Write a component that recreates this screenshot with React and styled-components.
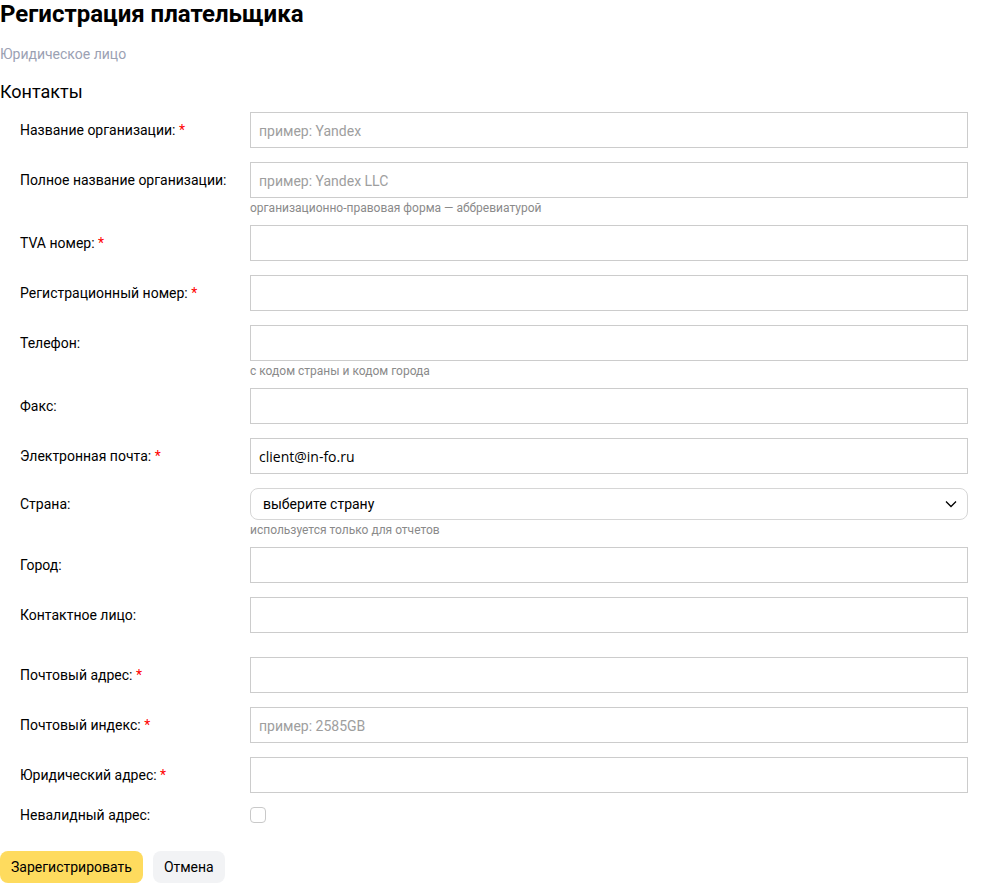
import React from "react";
import styled, { createGlobalStyle } from "styled-components";

const GlobalStyle = createGlobalStyle`
  body {
    margin: 0;
    background: #fff;
    font-family: Roboto, "Noto Sans", sans-serif;
    color: #000;
  }
`;

const fields = [
  { label: "Название организации:", required: true, placeholder: "пример: Yandex" },
  {
    label: "Полное название организации:",
    placeholder: "пример: Yandex LLC",
    hint: "организационно-правовая форма — аббревиатурой",
  },
  { label: "TVA номер:", required: true },
  { label: "Регистрационный номер:", required: true },
  { label: "Телефон:", hint: "с кодом страны и кодом города" },
  { label: "Факс:" },
  { label: "Электронная почта:", required: true, value: "client@in-fo.ru" },
  { label: "Страна:", select: "выберите страну", hint: "используется только для отчетов" },
  { label: "Город:" },
  { label: "Контактное лицо:" },
  { label: "Почтовый адрес:", required: true, spaced: true },
  { label: "Почтовый индекс:", required: true, placeholder: "пример: 2585GB" },
  { label: "Юридический адрес:", required: true },
];

function Chevron() {
  return (
    <svg width="12" height="8" viewBox="0 0 12 8" fill="none">
      <path d="M1 1.5l5 5 5-5" stroke="#000" strokeWidth="1.3" />
    </svg>
  );
}

function App() {
  return (
    <Page>
      <GlobalStyle />
      <Title>Регистрация плательщика</Title>
      <Subtitle>Юридическое лицо</Subtitle>
      <Section>Контакты</Section>

      <Form>
        {fields.map((f) => (
          <Row key={f.label} $spaced={f.spaced}>
            <Label $select={!!f.select}>
              {f.label}
              {f.required && <Star> *</Star>}
            </Label>
            <Control>
              {f.select ? (
                <Select>
                  {f.select}
                  <Chevron />
                </Select>
              ) : (
                <Input placeholder={f.placeholder} defaultValue={f.value} />
              )}
              {f.hint && <Hint>{f.hint}</Hint>}
            </Control>
          </Row>
        ))}
        <Row>
          <Label $check>Невалидный адрес:</Label>
          <Control>
            <Checkbox />
          </Control>
        </Row>
      </Form>

      <Buttons>
        <Button $primary>Зарегистрировать</Button>
        <Button>Отмена</Button>
      </Buttons>
    </Page>
  );
}

export default App;

const Page = styled.div`
  width: 968px;
  padding-bottom: 1px;
`;

const Title = styled.h1`
  margin: 0;
  font-size: 24px;
  line-height: 28px;
  font-weight: 700;
  color: #000;
`;

const Subtitle = styled.div`
  margin-top: 17px;
  font-size: 14px;
  line-height: 18px;
  color: #9ba1b3;
`;

const Section = styled.h2`
  margin: 18px 0 0;
  font-size: 18px;
  line-height: 22px;
  font-weight: 400;
  color: #000;
`;

const Form = styled.div`
  display: flex;
  flex-direction: column;
  gap: 14px;
  margin-top: 9px;
`;

const Row = styled.div`
  display: grid;
  grid-template-columns: 250px 1fr;
  margin-top: ${(p) => (p.$spaced ? "10px" : "0")};
`;

const Label = styled.div`
  padding-left: 20px;
  font-size: 14px;
  line-height: 18px;
  padding-top: ${(p) => (p.$check ? "0" : p.$select ? "7px" : "9px")};
  margin-top: ${(p) => (p.$check ? "-1px" : "0")};
  color: #000;
`;

const Star = styled.span`
  color: #f00;
`;

const Control = styled.div`
  display: flex;
  flex-direction: column;
  align-items: flex-start;
`;

const Input = styled.input`
  box-sizing: border-box;
  width: 718px;
  height: 36px;
  margin: 0;
  padding: 0 8px;
  border: 1px solid #cccccc;
  border-radius: 0;
  outline: none;
  font-family: "Open Sans", Roboto, sans-serif;
  font-size: 14px;
  color: #000;
  background: #fff;

  &::placeholder {
    color: #9e9e9e;
    font-family: Roboto, sans-serif;
  }
`;

const Select = styled.div`
  box-sizing: border-box;
  width: 718px;
  height: 32px;
  display: flex;
  align-items: center;
  justify-content: space-between;
  padding: 0 10px 0 12px;
  border: 1px solid #d6d6d6;
  border-radius: 8px;
  font-size: 14px;
  color: #000;
`;

const Hint = styled.div`
  margin: 3px 0 -4px;
  font-size: 12px;
  line-height: 14px;
  color: #8a8a8a;
`;

const Checkbox = styled.div`
  box-sizing: border-box;
  width: 16px;
  height: 16px;
  border: 1px solid #c9c9c9;
  border-radius: 4px;
  background: #fff;
`;

const Buttons = styled.div`
  display: flex;
  gap: 10px;
  margin-top: 27px;
`;

const Button = styled.button`
  height: 32px;
  padding: 0 11px;
  border: none;
  border-radius: 8px;
  font-family: Roboto, sans-serif;
  font-size: 14px;
  color: #000;
  background: ${(p) => (p.$primary ? "#fedb5e" : "#f2f3f5")};
  cursor: pointer;
`;
